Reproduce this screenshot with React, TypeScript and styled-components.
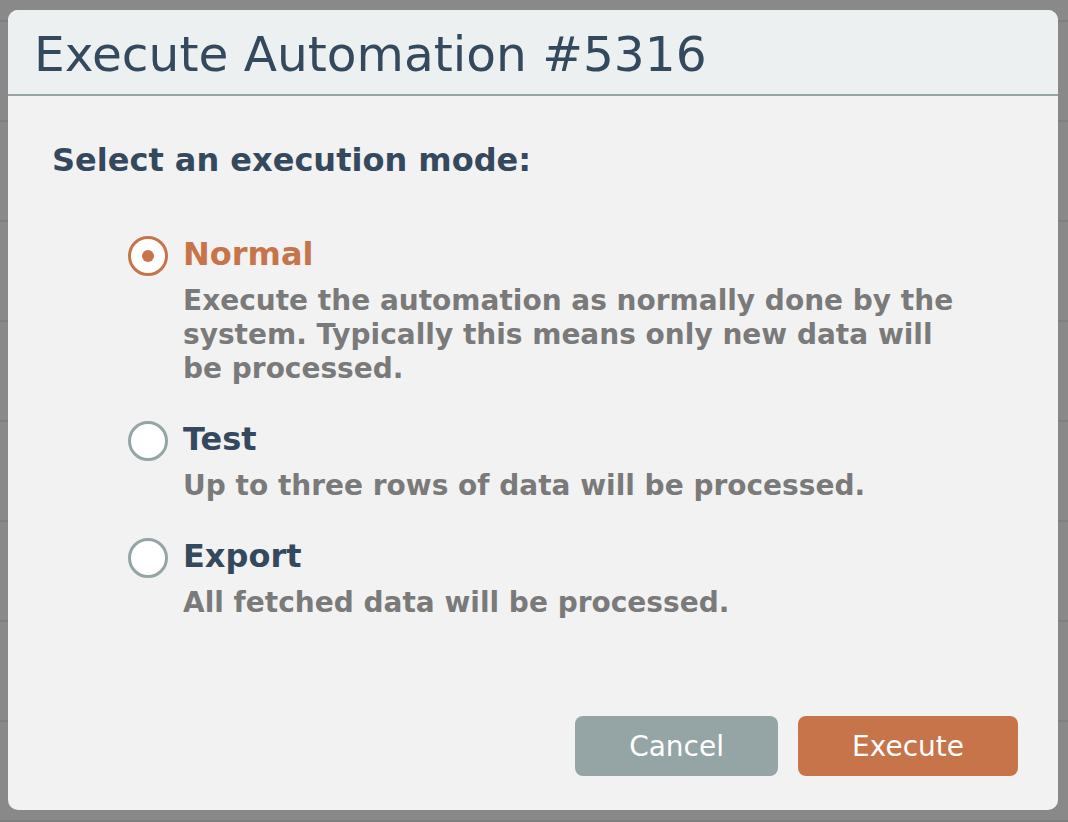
import { useState } from "react";
import styled, { createGlobalStyle } from "styled-components";

const GlobalStyle = createGlobalStyle`
  html, body {
    margin: 0;
    padding: 0;
  }
  body {
    width: 1068px;
    height: 822px;
    overflow: hidden;
    font-family: "DejaVu Sans", Verdana, sans-serif;
    background-color: #898989;
    background-image: repeating-linear-gradient(
      to bottom,
      transparent 0px,
      transparent 20px,
      #7f7f7f 20px,
      #7f7f7f 22px,
      transparent 22px,
      transparent 100px
    );
  }
`;

const Overlay = styled.div`
  padding: 10px 10px 12px 8px;
`;

const Modal = styled.div`
  width: 1050px;
  height: 800px;
  box-sizing: border-box;
  background-color: #f2f2f2;
  border-radius: 10px;
  overflow: hidden;
  display: flex;
  flex-direction: column;
`;

const Header = styled.div`
  background-color: #ecf0f1;
  border-bottom: 2px solid #95a5a6;
  padding: 16px 26px 12px;
  h1 {
    margin: 0;
    font-size: 48.6px;
    line-height: 56px;
    font-weight: normal;
    color: #34495e;
  }
`;

const Body = styled.div`
  flex: 1;
  padding: 46px 44px 0;
`;

const Prompt = styled.div`
  font-size: 32px;
  font-weight: bold;
  line-height: 37px;
  color: #34495e;
`;

const Options = styled.div`
  margin-top: 57px;
  padding-left: 76px;
  display: flex;
  flex-direction: column;
  gap: 35px;
`;

const Option = styled.label`
  display: grid;
  grid-template-columns: 40px 1fr;
  column-gap: 15px;
  row-gap: 8px;
  cursor: pointer;
`;

const Radio = styled.span<{ $checked: boolean }>`
  width: 40px;
  height: 40px;
  box-sizing: border-box;
  border-radius: 50%;
  background: #fff;
  border: 3.5px solid ${(p) => (p.$checked ? "#c8744a" : "#95a5a6")};
  align-self: center;
  display: flex;
  align-items: center;
  justify-content: center;
  &::after {
    content: "";
    width: 12px;
    height: 12px;
    border-radius: 50%;
    background: #c8744a;
    display: ${(p) => (p.$checked ? "block" : "none")};
  }
`;

const Label = styled.span<{ $checked: boolean }>`
  font-size: 32px;
  font-weight: bold;
  line-height: 37px;
  color: ${(p) => (p.$checked ? "#c8744a" : "#34495e")};
`;

const Desc = styled.div`
  grid-column: 2;
  max-width: 790px;
  font-size: 28px;
  font-weight: bold;
  line-height: 34px;
  color: #7a7a7a;
`;

const Footer = styled.div`
  display: flex;
  justify-content: flex-end;
  gap: 20px;
  padding: 0 40px 34px;
`;

const Button = styled.button<{ $primary?: boolean }>`
  height: 60px;
  padding: 0 54px;
  min-width: 202px;
  border: none;
  border-radius: 8px;
  font-family: "DejaVu Sans", Verdana, sans-serif;
  font-size: 28px;
  color: #fff;
  background-color: ${(p) => (p.$primary ? "#c8744a" : "#95a5a6")};
  cursor: pointer;
`;

const modes = [
  {
    key: "normal",
    label: "Normal",
    desc: "Execute the automation as normally done by the system. Typically this means only new data will be processed.",
  },
  { key: "test", label: "Test", desc: "Up to three rows of data will be processed." },
  { key: "export", label: "Export", desc: "All fetched data will be processed." },
];

function App() {
  const [mode, setMode] = useState("normal");

  return (
    <>
      <GlobalStyle />
      <Overlay>
        <Modal>
          <Header>
            <h1>Execute Automation #5316</h1>
          </Header>
          <Body>
            <Prompt>Select an execution mode:</Prompt>
            <Options>
              {modes.map((m) => (
                <Option key={m.key} onClick={() => setMode(m.key)}>
                  <Radio $checked={mode === m.key} />
                  <Label $checked={mode === m.key}>{m.label}</Label>
                  <Desc>{m.desc}</Desc>
                </Option>
              ))}
            </Options>
          </Body>
          <Footer>
            <Button>Cancel</Button>
            <Button $primary>Execute</Button>
          </Footer>
        </Modal>
      </Overlay>
    </>
  );
}

export default App;
